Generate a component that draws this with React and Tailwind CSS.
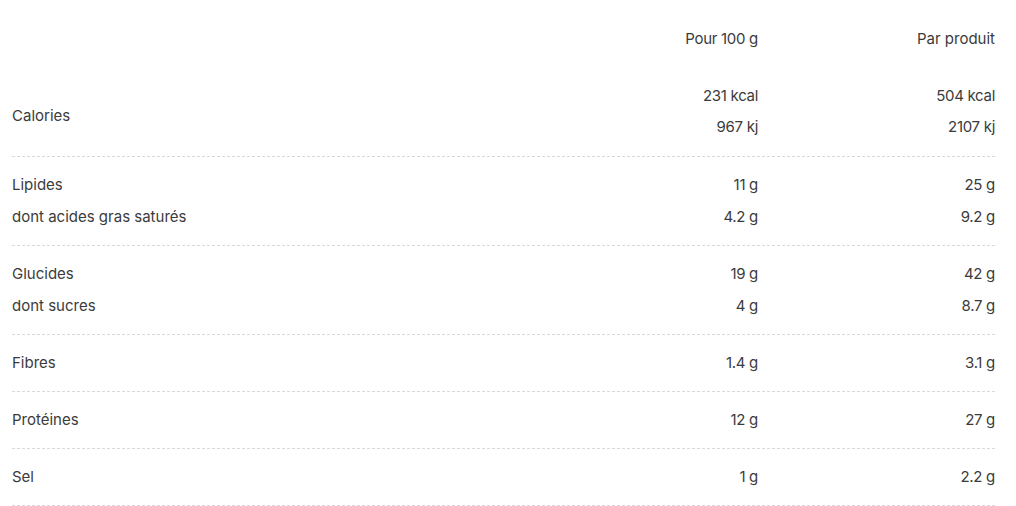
import React from 'react';

const groups = [
  { rows: [['Lipides', '11 g', '25 g'], ['dont acides gras saturés', '4.2 g', '9.2 g']] },
  { rows: [['Glucides', '19 g', '42 g'], ['dont sucres', '4 g', '8.7 g']] },
  { rows: [['Fibres', '1.4 g', '3.1 g']] },
  { rows: [['Protéines', '12 g', '27 g']] },
  { rows: [['Sel', '1 g', '2.2 g']] },
];

const App = () => {
  return (
    <div className="min-h-screen bg-white pl-3 pr-[21px] font-['Inter',sans-serif] text-[15px] text-[#3b3b3b]">
      {/* header */}
      <div className="flex pt-[27px] h-[80px] leading-6">
        <div className="flex-1" />
        <div className="w-[180px] text-right tracking-[-0.02em]">Pour 100 g</div>
        <div className="w-[237px] text-right">Par produit</div>
      </div>

      {/* calories */}
      <div className="flex border-b border-dashed border-[#d9d9d9] pb-[14px]">
        <div className="flex-1 flex items-center pt-[11px]">Calories</div>
        <div className="w-[180px] text-right leading-[31px] tracking-[-0.02em]">
          <div>231 kcal</div>
          <div>967 kj</div>
        </div>
        <div className="w-[237px] text-right leading-[31px] tracking-[-0.02em]">
          <div>504 kcal</div>
          <div>2107 kj</div>
        </div>
      </div>

      {groups.map((g, i) => (
        <div key={i} className="border-b border-dashed border-[#d9d9d9] pt-3 pb-3">
          {g.rows.map((r) => (
            <div key={r[0]} className="flex leading-8">
              <div className="flex-1">{r[0]}</div>
              <div className="w-[180px] text-right tracking-[-0.02em]">{r[1]}</div>
              <div className="w-[237px] text-right tracking-[-0.02em]">{r[2]}</div>
            </div>
          ))}
        </div>
      ))}
    </div>
  );
};

export default App;
